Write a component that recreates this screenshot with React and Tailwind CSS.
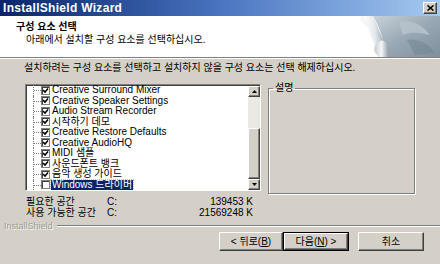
const items = [
  { label: 'Creative Surround Mixer', on: true },
  { label: 'Creative Speaker Settings', on: true },
  { label: 'Audio Stream Recorder', on: true },
  { label: '시작하기 데모', on: true },
  { label: 'Creative Restore Defaults', on: true },
  { label: 'Creative AudioHQ', on: true },
  { label: 'MIDI 샘플', on: true },
  { label: '사운드폰트 뱅크', on: true },
  { label: '음악 생성 가이드', on: true },
  { label: 'Windows 드라이버', on: false, sel: true },
];

// classic 3D raised button edges
const raised = 'border border-t-white border-l-white border-b-[#404040] border-r-[#404040] shadow-[inset_-1px_-1px_0_#808080]';

const Check = ({ on }) => (
  <span className="w-[9px] h-[9px] bg-white border border-[#808080] shadow-[inset_1px_1px_0_#404040] flex items-center justify-center shrink-0">
    {on && (
      <svg width="7" height="7" viewBox="0 0 7 7">
        <path d="M1 3 L3 5 L6 1.5" fill="none" stroke="black" strokeWidth="1.6" />
      </svg>
    )}
  </span>
);

const HeaderArt = () => (
  <svg width="83" height="41" viewBox="0 0 83 41" className="shrink-0">
    <defs>
      <linearGradient id="bgArt" x1="0" y1="0" x2="1" y2="1">
        <stop offset="0" stopColor="#c9d2d9" />
        <stop offset="0.5" stopColor="#98a8b4" />
        <stop offset="1" stopColor="#7f909d" />
      </linearGradient>
      <linearGradient id="curl" x1="0" y1="0" x2="1" y2="0">
        <stop offset="0" stopColor="#ffffff" />
        <stop offset="0.55" stopColor="#e6eaed" />
        <stop offset="1" stopColor="#a3aeb7" />
      </linearGradient>
      <linearGradient id="roll" x1="0" y1="0" x2="1" y2="0">
        <stop offset="0" stopColor="#c5ccd2" />
        <stop offset="0.5" stopColor="#f4f6f7" />
        <stop offset="1" stopColor="#8e9aa4" />
      </linearGradient>
    </defs>
    <path d="M16 0 L83 0 L83 41 L30 41 C28 28 24 14 16 0 Z" fill="url(#bgArt)" />
    <path d="M42 6 C54 3 66 9 73 19 C64 17 54 15 46 19 Z" fill="#b8c4cd" opacity="0.8" />
    <path d="M50 24 C60 22 71 27 78 37 L58 39 Z" fill="#6e808e" opacity="0.45" />
    <path d="M0 0 L16 0 C20 9 23 18 27 25 C22 22 10 12 0 0 Z" fill="url(#curl)" />
    <path d="M16 0 C20 9 23 18 27 25 L18 30 C14 20 10 10 6 0 Z" fill="url(#curl)" opacity="0.9" />
    <path d="M18 30 C20 26 24 24 27 25 C31 27 33 34 31 41 L22 41 C18 38 16 34 18 30 Z" fill="url(#roll)" />
  </svg>
);

export default function App() {
  return (
    <div className="w-[440px] h-[264px] bg-[#d4d0c8] flex flex-col overflow-hidden text-black font-['Liberation_Sans','Noto_Sans_CJK_KR',sans-serif]">
      {/* title bar */}
      <div className="h-[16px] shrink-0 flex items-center justify-between pl-[3px] pr-[3px] bg-gradient-to-r from-[#0a246a] via-[#4a74c0] to-[#a6caf0]">
        <span className="text-white font-bold text-[12px] tracking-[0.3px] leading-none">InstallShield Wizard</span>
        <span className={`w-[14px] h-[12px] bg-[#d4d0c8] flex items-center justify-center ${raised}`}>
          <svg width="7" height="6" viewBox="0 0 7 6">
            <path d="M0.5 0.5 L6.5 5.5 M6.5 0.5 L0.5 5.5" stroke="black" strokeWidth="1.6" />
          </svg>
        </span>
      </div>

      {/* header */}
      <div className="h-[41px] shrink-0 bg-white flex justify-between">
        <div className="pl-[16px] pt-[5px] flex flex-col gap-[1px]">
          <span className="font-bold text-[10px] leading-[12px]">구성 요소 선택</span>
          <span className="pl-[10px] text-[10px] leading-[12px]">아래에서 설치할 구성 요소를 선택하십시오.</span>
        </div>
        <HeaderArt />
      </div>
      <div className="shrink-0 border-t border-[#808080] border-b border-b-white" />

      {/* body */}
      <div className="flex-1 flex flex-col">
        <p className="pl-[24px] pt-[3px] text-[10px] leading-[12px]">
          설치하려는 구성 요소를 선택하고 설치하지 않을 구성 요소는 선택 해제하십시오.
        </p>

        <div className="flex items-start mt-[10px] pl-[25px]">
          {/* tree list */}
          <div className="w-[236px] h-[107px] bg-white border border-t-[#808080] border-l-[#808080] border-b-white border-r-white shadow-[inset_1px_1px_0_#404040] flex overflow-hidden">
            <div className="flex-1 flex flex-col pl-[7px]">
              {items.map((it) => (
                <div key={it.label} className="h-[10.5px] flex items-center text-[10px] leading-none whitespace-nowrap">
                  <span className="relative w-[8px] h-full shrink-0 border-l border-dotted border-[#808080]">
                    <span className="absolute left-0 right-0 top-1/2 border-t border-dotted border-[#808080]" />
                  </span>
                  <Check on={it.on} />
                  <span className={`ml-[1px] px-[1px] h-full flex items-center ${it.sel ? 'bg-[#0a246a] text-white outline outline-1 outline-dotted outline-[#c0c0c0]' : ''}`}>
                    {it.label}
                  </span>
                </div>
              ))}
            </div>
            {/* scrollbar */}
            <div className="w-[12px] h-full flex flex-col shrink-0 mt-[1px] mb-[1px]">
              <span className={`h-[11px] bg-[#d4d0c8] flex items-center justify-center shrink-0 ${raised}`}>
                <svg width="5" height="3" viewBox="0 0 5 3"><path d="M2.5 0 L5 3 L0 3 Z" fill="black" /></svg>
              </span>
              <span className="h-[31px] shrink-0 bg-[#ebe9e4]" />
              <span className={`flex-1 bg-[#d4d0c8] ${raised}`} />
              <span className={`h-[11px] bg-[#d4d0c8] flex items-center justify-center shrink-0 mb-[1px] ${raised}`}>
                <svg width="5" height="3" viewBox="0 0 5 3"><path d="M0 0 L5 0 L2.5 3 Z" fill="black" /></svg>
              </span>
            </div>
          </div>

          {/* description group */}
          <fieldset className="ml-[7px] mt-[-2px] w-[147px] h-[112px] border border-[#808080] shadow-[1px_1px_0_white,inset_1px_1px_0_white] px-[2px]">
            <legend className="ml-[2px] px-[2px] text-[10px] leading-[12px]">설명</legend>
          </fieldset>
        </div>

        {/* disk space */}
        <div className="pl-[26px] w-[253px] mt-[2px] text-[10px] leading-[11px]">
          <div className="flex">
            <span className="w-[81px]">필요한 공간</span>
            <span>C:</span>
            <span className="ml-auto">139453 K</span>
          </div>
          <div className="flex">
            <span className="w-[81px]">사용 가능한 공간</span>
            <span>C:</span>
            <span className="ml-auto">21569248 K</span>
          </div>
        </div>

        {/* installshield etched line */}
        <div className="flex items-center mt-[3px] pl-[4px] h-[10px]">
          <span className="text-[9px] leading-none text-[#a09c94] [text-shadow:1px_1px_0_#f4f2ee]">InstallShield</span>
          <span className="flex-1 ml-[4px] border-t border-[#808080] border-b border-b-white" />
        </div>

        {/* buttons */}
        <div className="flex mt-[1px] pl-[219px] text-[10px]">
          <button className={`w-[64px] h-[19px] bg-[#d4d0c8] flex items-center justify-center ${raised}`}>
            &lt; 뒤로(<u>B</u>)
          </button>
          <button className="w-[66px] h-[19px] bg-[#d4d0c8] border border-black flex">
            <span className={`flex-1 flex items-center justify-center ${raised}`}>
              다음(<u>N</u>) &gt;
            </span>
          </button>
          <button className={`ml-[9px] w-[66px] h-[19px] bg-[#d4d0c8] flex items-center justify-center ${raised}`}>
            취소
          </button>
        </div>
      </div>
    </div>
  );
}
